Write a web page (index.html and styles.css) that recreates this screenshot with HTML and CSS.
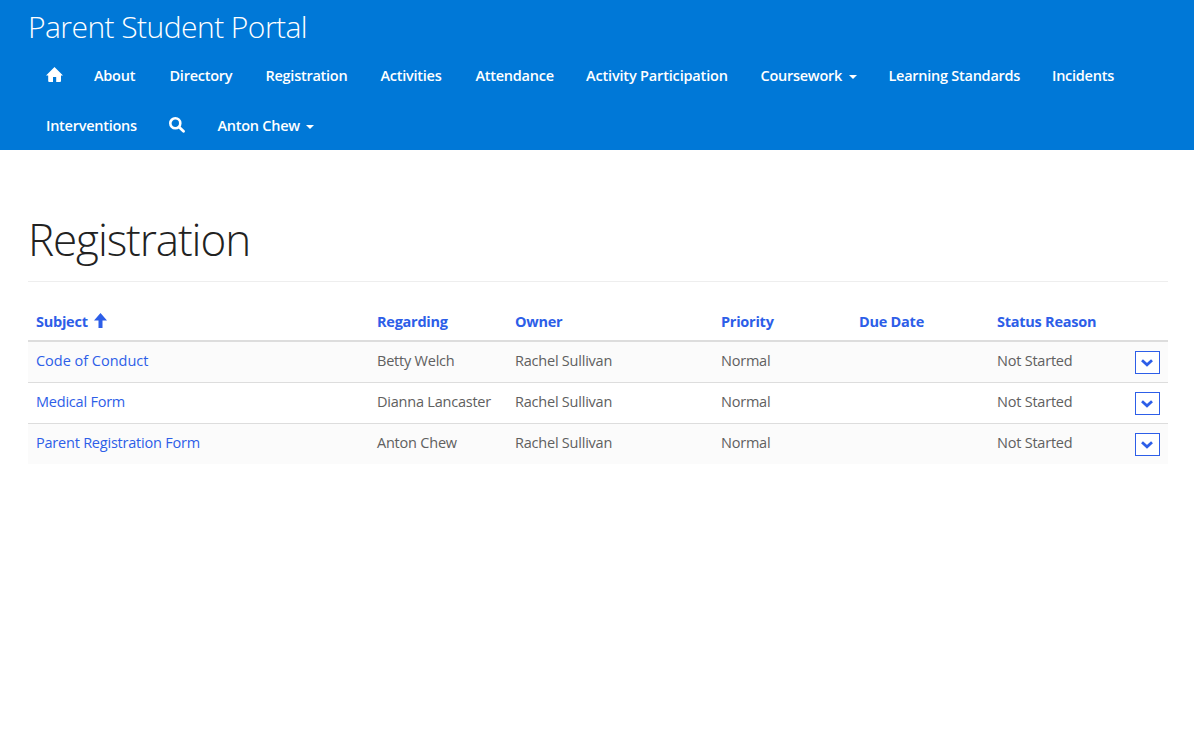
FILE: index.html
```html
<!DOCTYPE html>
<html lang="en">
<head>
<meta charset="utf-8">
<title>Registration</title>
<link rel="stylesheet" href="styles.css">
</head>
<body>
<header class="header">
  <div class="brand"><span>Parent Student Portal</span></div>
  <nav>
    <div class="nav-row nav-main">
      <a><svg class="home" viewBox="0 0 17 15" width="17" height="15"><path d="M8.500 0 0 8.500h2.200V14q0 1 1 1H7v-5h3.200v5H14q1 0 1-1V8.500h2z" fill="#fff"/></svg></a>
      <a>About</a><a>Directory</a><a>Registration</a><a>Activities</a><a>Attendance</a><a class="wide">Activity Participation</a><a>Coursework<i class="caret"></i></a><a>Learning Standards</a><a>Incidents</a>
    </div>
    <div class="nav-row nav-more">
      <a>Interventions</a>
      <a><svg class="search" viewBox="0 0 16 16" width="16" height="16"><circle cx="6.300" cy="6.300" r="5" fill="none" stroke="#fff" stroke-width="2.600"/><path d="m10 10 4.500 4.300" stroke="#fff" stroke-width="2.800" stroke-linecap="round"/></svg></a>
      <a>Anton Chew<i class="caret"></i></a>
    </div>
  </nav>
</header>
<main class="page">
  <h1><span>Registration</span></h1>
  <table class="grid">
    <colgroup><col class="c-subject"><col class="c-regarding"><col class="c-owner"><col class="c-priority"><col class="c-due"><col class="c-status"><col class="c-action"></colgroup>
    <thead><tr><th>Subject<svg class="sort" viewBox="0 0 13 15" width="13" height="15"><path d="M6.500 0 13 7.500H8.500V15h-4V7.500H0z" fill="#2d5ee8"/></svg></th><th>Regarding</th><th>Owner</th><th>Priority</th><th>Due Date</th><th>Status Reason</th><th></th></tr></thead>
    <tbody>
      <tr><td><a class="loose">Code of Conduct</a></td><td>Betty Welch</td><td>Rachel Sullivan</td><td>Normal</td><td></td><td>Not Started</td><td><button class="drop"><svg viewBox="0 0 12 8" width="12" height="8"><path d="m1 1.300 5 4.500 5-4.500" fill="none" stroke="#2d5ee8" stroke-width="2.800"/></svg></button></td></tr>
      <tr><td><a>Medical Form</a></td><td>Dianna Lancaster</td><td>Rachel Sullivan</td><td>Normal</td><td></td><td>Not Started</td><td><button class="drop"><svg viewBox="0 0 12 8" width="12" height="8"><path d="m1 1.300 5 4.500 5-4.500" fill="none" stroke="#2d5ee8" stroke-width="2.800"/></svg></button></td></tr>
      <tr><td><a>Parent Registration Form</a></td><td>Anton Chew</td><td>Rachel Sullivan</td><td>Normal</td><td></td><td>Not Started</td><td><button class="drop"><svg viewBox="0 0 12 8" width="12" height="8"><path d="m1 1.300 5 4.500 5-4.500" fill="none" stroke="#2d5ee8" stroke-width="2.800"/></svg></button></td></tr>
    </tbody>
  </table>
</main>
</body>
</html>
```
FILE: styles.css
```css
* { box-sizing: border-box; }
body { margin: 0; background: #fff; color: #555; font: 14px/20px "Segoe UI", "Open Sans", sans-serif; white-space: nowrap; }
.header { height: 150px; background: #0078d7; color: #fff; }
.brand { height: 50px; padding: 7px 0 0 28px; font-size: 30px; line-height: 40px; font-weight: 300; letter-spacing: -0.55px; }
.nav-row { display: grid; height: 50px; padding: 16px 0 0 46px; font-size: 14.5px; letter-spacing: -0.26px; font-weight: 600; }
.nav-main { grid-template-columns: 48px 75.5px 96px 115px 95px 110.5px 174.500px 128px 163.5px 62px; }
.nav-more { grid-template-columns: 123px 48.5px 100px; }
.wide { letter-spacing: -0.17px; }
.home { display: block; margin-top: 1px; }
.search { display: block; margin-top: 1px; }
.caret { display: inline-block; margin-left: 6.5px; vertical-align: 2px; border: 4px solid transparent; border-top-color: #fff; border-bottom: 0; }
.page { padding: 50px 26px 0 28px; }
h1 { margin: 0; height: 82px; padding-top: 9px; border-bottom: 1px solid #eee; color: #222; font-size: 44px; line-height: 60px; font-weight: 300; letter-spacing: -1.1px; }
.grid { width: 1140px; margin-top: 20px; table-layout: fixed; border-collapse: separate; border-spacing: 0; }
.c-subject { width: 341px; }
.c-regarding { width: 138px; }
.c-owner { width: 206px; }
.c-priority { width: 138px; }
.c-due { width: 138px; }
.c-status { width: 138px; }
.c-action { width: 41px; }
th { height: 40px; padding: 1px 8px 0; text-align: left; vertical-align: middle; color: #2d5ee8; font-size: 14.5px; letter-spacing: -0.25px; font-weight: 700; border-bottom: 2px solid #ddd; }
.sort { margin-left: 6px; vertical-align: -1px; }
td { height: 41px; padding: 9px 8px 0; vertical-align: top; color: #606060; font-size: 14.5px; letter-spacing: -0.22px; border-bottom: 1px solid #ddd; }
td:last-child { padding-top: 8px; }
td a { color: #2d5ee8; }
.loose { letter-spacing: -0.02px; }
tbody tr:nth-child(odd) td { background: #fbfbfb; }
tbody tr:last-child td { height: 40px; border-bottom: 0; }
.drop { display: flex; align-items: center; justify-content: center; width: 25px; height: 23px; margin: 1px 0 0; padding: 0 1px 0 0; background: #fff; border: 1px solid #2d5ee8; }
```
